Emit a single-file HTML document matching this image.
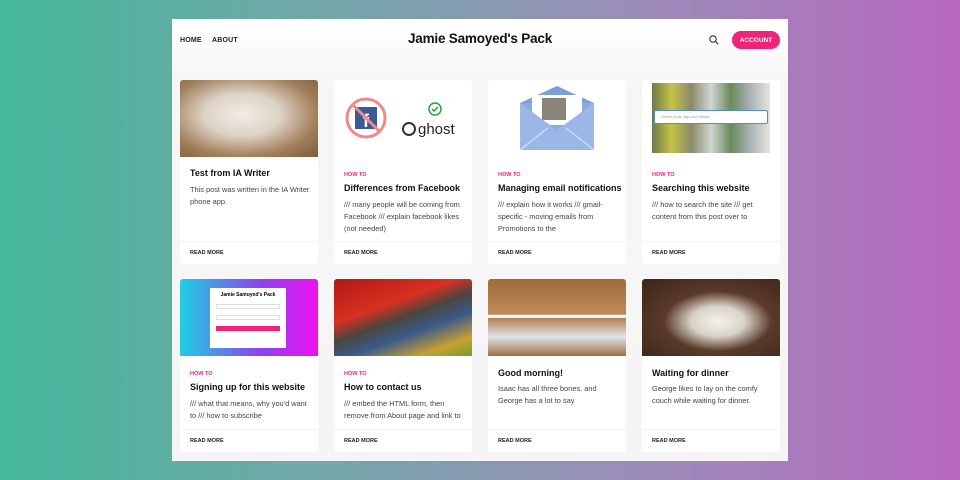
<!DOCTYPE html>
<html><head><meta charset="utf-8"><style>
*{margin:0;padding:0;box-sizing:border-box}
body{width:960px;height:480px;overflow:hidden;background:linear-gradient(90deg,#44b89a 0%,#6fa9a8 30%,#9a8fb8 65%,#b768c0 100%);font-family:"Liberation Sans",sans-serif;position:relative}
.wrap{position:absolute;left:172px;top:19px;width:616px;height:442px;background:linear-gradient(180deg,#fff 0%,#f6f6f6 60px,#f5f5f5 100%)}
.nav{position:absolute;top:18px;font-size:7px;font-weight:bold;color:#222;letter-spacing:.2px}
.title{position:absolute;left:0;width:616px;top:12px;text-align:center;font-size:13.5px;font-weight:bold;color:#111;letter-spacing:-.2px}
.acc{position:absolute;left:560px;top:12px;width:48px;height:18px;border-radius:9px;background:#f0237a;color:#fff;font-size:6.5px;font-weight:bold;display:flex;align-items:center;justify-content:center}
.card{position:absolute;width:138px;background:#fff;border-radius:3px;overflow:hidden}
.img{height:77px}
.tag{position:absolute;left:10px;font-size:5.5px;font-weight:bold;color:#f0237a}
.h{position:absolute;left:10px;font-size:9px;font-weight:bold;color:#111;white-space:nowrap}
.p{position:absolute;left:10px;width:122px;font-size:7.4px;line-height:12px;color:#444}
.rm{position:absolute;left:10px;bottom:8px;font-size:5.5px;font-weight:bold;color:#222}
.line{position:absolute;left:0;right:0;bottom:22px;border-top:1px solid #f2f2f2}
</style></head><body>
<div class="wrap">
<div class="nav" style="left:8px">HOME</div>
<div class="nav" style="left:40px">ABOUT</div>
<div class="title">Jamie Samoyed's Pack</div>
<svg style="position:absolute;left:537px;top:16px" width="10" height="10" viewBox="0 0 10 10"><circle cx="4" cy="4" r="3.2" fill="none" stroke="#333" stroke-width="1.1"/><line x1="6.4" y1="6.4" x2="9.3" y2="9.3" stroke="#333" stroke-width="1.1"/></svg>
<div class="acc">ACCOUNT</div>

<div class="card" style="left:8px;top:61px;height:184px">
<div class="img" style="background:radial-gradient(ellipse at 45% 45%,#f2ede6 0%,#ddd3c6 35%,#a27e5a 70%,#7a5b3d 100%)"></div>
<div class="h" style="top:88px">Test from IA Writer</div>
<div class="p" style="top:104px">This post was written in the IA Writer phone app.</div>
<div class="line"></div><div class="rm">READ MORE</div></div>

<div class="card" style="left:162px;top:61px;height:184px">
<div class="img" style="background:#fff;position:relative">
<svg width="138" height="77" viewBox="0 0 138 77"><circle cx="32" cy="38" r="19" fill="#fff" stroke="#f08a8a" stroke-width="3"/><rect x="21" y="27" width="22" height="22" fill="#3b5998"/><text x="29" y="47" font-size="18" font-weight="bold" fill="#fff" font-family="Liberation Sans">f</text><line x1="19" y1="25" x2="45" y2="51" stroke="#f08a8a" stroke-width="3"/><circle cx="101" cy="29" r="6" fill="none" stroke="#27a040" stroke-width="1.5"/><path d="M98 29l2 2 4-4" fill="none" stroke="#27a040" stroke-width="1.5"/><circle cx="75" cy="49" r="6" fill="none" stroke="#333" stroke-width="2"/><text x="84" y="54" font-size="15" fill="#222" font-family="Liberation Sans">ghost</text></svg></div>
<div class="tag" style="top:92px">HOW TO</div>
<div class="h" style="top:103px">Differences from Facebook</div>
<div class="p" style="top:119px">/// many people will be coming from Facebook /// explain facebook likes (not needed)</div>
<div class="line"></div><div class="rm">READ MORE</div></div>

<div class="card" style="left:316px;top:61px;height:184px">
<div class="img" style="background:#fff"><svg width="138" height="77" viewBox="0 0 138 77"><rect x="32" y="23" width="74" height="47" fill="#8aabe0"/><path d="M32 23L69 6L106 23Z" fill="#7c9fdb"/><rect x="44" y="15" width="50" height="30" fill="#fff"/><rect x="54" y="18" width="24" height="22" fill="#8a8578"/><path d="M32 23L69 50L106 23V70H32Z" fill="#9ab7e8"/><path d="M32 70L60 48M106 70L78 48" stroke="#c9d7f2" stroke-width="1.5"/></svg></div>
<div class="tag" style="top:92px">HOW TO</div>
<div class="h" style="top:103px">Managing email notifications</div>
<div class="p" style="top:119px">/// explain how it works /// gmail-specific - moving emails from Promotions to the</div>
<div class="line"></div><div class="rm">READ MORE</div></div>

<div class="card" style="left:470px;top:61px;height:184px">
<div class="img" style="background:#fff;position:relative"><div style="position:absolute;left:10px;top:3px;width:118px;height:70px;background:linear-gradient(90deg,#6b7a4a,#c8c24a,#8a8a6a,#d0d6d0,#6a8a5a,#a9b2b8,#e8e4dc)"></div><div style="position:absolute;left:12px;top:30px;width:114px;height:14px;background:#fff;border:1px solid #5a8ac8;border-radius:2px;font-size:3.5px;color:#999;padding:4px 6px">Search posts, tags and authors</div></div>
<div class="tag" style="top:92px">HOW TO</div>
<div class="h" style="top:103px">Searching this website</div>
<div class="p" style="top:119px">/// how to search the site /// get content from this post over to</div>
<div class="line"></div><div class="rm">READ MORE</div></div>

<div class="card" style="left:8px;top:260px;height:173px">
<div class="img" style="background:linear-gradient(90deg,#1fcfe0,#9040f0 60%,#f010f0);position:relative"><div style="position:absolute;left:30px;top:9px;width:76px;height:60px;background:#fff;padding:4px 6px"><div style="font-size:5px;font-weight:bold;text-align:center">Jamie Samoyed's Pack</div><div style="margin-top:6px;height:5px;border:1px solid #ddd"></div><div style="margin-top:6px;height:5px;border:1px solid #ddd"></div><div style="margin-top:6px;height:5px;background:#f0237a"></div></div></div>
<div class="tag" style="top:92px">HOW TO</div>
<div class="h" style="top:103px">Signing up for this website</div>
<div class="p" style="top:119px">/// what that means, why you'd want to /// how to subscribe</div>
<div class="line"></div><div class="rm">READ MORE</div></div>

<div class="card" style="left:162px;top:260px;height:173px">
<div class="img" style="background:linear-gradient(160deg,#b01818 0%,#d83020 35%,#4a4540 50%,#3a5a8a 65%,#c8a030 85%,#70a030 100%)"></div>
<div class="tag" style="top:92px">HOW TO</div>
<div class="h" style="top:103px">How to contact us</div>
<div class="p" style="top:119px">/// embed the HTML form, then remove from About page and link to</div>
<div class="line"></div><div class="rm">READ MORE</div></div>

<div class="card" style="left:316px;top:260px;height:173px">
<div class="img" style="background:linear-gradient(180deg,#a06a3a 0%,#c08a5a 46%,#fff 47%,#fff 50%,#b08050 51%,#e0e4ea 75%,#a07040 100%)"></div>
<div class="h" style="top:89px">Good morning!</div>
<div class="p" style="top:104px">Isaac has all three bones. and George has a lot to say</div>
<div class="line"></div><div class="rm">READ MORE</div></div>

<div class="card" style="left:470px;top:260px;height:173px">
<div class="img" style="background:radial-gradient(ellipse at 55% 55%,#f4f2ee 0%,#d8d2c8 25%,#5a3a2a 50%,#3a2418 100%)"></div>
<div class="h" style="top:89px">Waiting for dinner</div>
<div class="p" style="top:104px">George likes to lay on the comfy couch while waiting for dinner.</div>
<div class="line"></div><div class="rm">READ MORE</div></div>
</div>
</body></html>
